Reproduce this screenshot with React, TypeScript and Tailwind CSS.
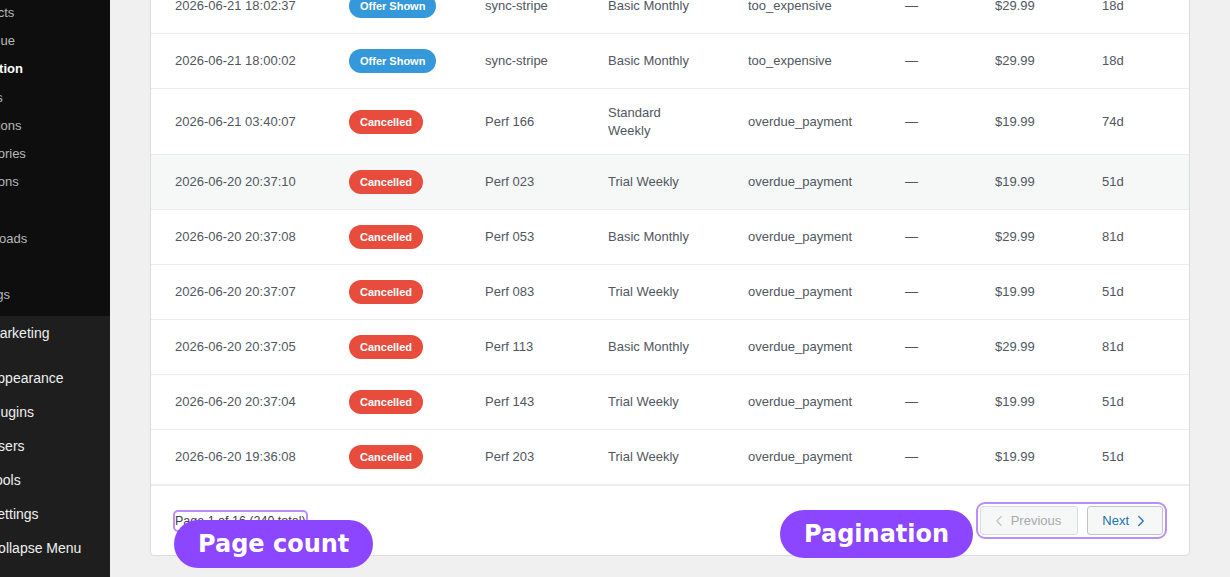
import { ChevronLeft, ChevronRight } from "lucide-react";

type Row = {
  date: string;
  status: "offer" | "cancelled";
  source: string;
  plan: string;
  reason: string;
  price: string;
  days: string;
  hover?: boolean;
};

const rows: Row[] = [
  { date: "2026-06-21 18:02:37", status: "offer", source: "sync-stripe", plan: "Basic Monthly", reason: "too_expensive", price: "$29.99", days: "18d" },
  { date: "2026-06-21 18:00:02", status: "offer", source: "sync-stripe", plan: "Basic Monthly", reason: "too_expensive", price: "$29.99", days: "18d" },
  { date: "2026-06-21 03:40:07", status: "cancelled", source: "Perf 166", plan: "Standard Weekly", reason: "overdue_payment", price: "$19.99", days: "74d" },
  { date: "2026-06-20 20:37:10", status: "cancelled", source: "Perf 023", plan: "Trial Weekly", reason: "overdue_payment", price: "$19.99", days: "51d", hover: true },
  { date: "2026-06-20 20:37:08", status: "cancelled", source: "Perf 053", plan: "Basic Monthly", reason: "overdue_payment", price: "$29.99", days: "81d" },
  { date: "2026-06-20 20:37:07", status: "cancelled", source: "Perf 083", plan: "Trial Weekly", reason: "overdue_payment", price: "$19.99", days: "51d" },
  { date: "2026-06-20 20:37:05", status: "cancelled", source: "Perf 113", plan: "Basic Monthly", reason: "overdue_payment", price: "$29.99", days: "81d" },
  { date: "2026-06-20 20:37:04", status: "cancelled", source: "Perf 143", plan: "Trial Weekly", reason: "overdue_payment", price: "$19.99", days: "51d" },
  { date: "2026-06-20 19:36:08", status: "cancelled", source: "Perf 203", plan: "Trial Weekly", reason: "overdue_payment", price: "$19.99", days: "51d" },
];

const submenu = [
  { label: "Products" },
  { label: "Revenue" },
  { label: "Retention", current: true },
  { label: "Events" },
  { label: "Questions" },
  { label: "Categories" },
  { label: "Locations" },
  { label: "Help" },
  { label: "Downloads" },
  { label: "Logs" },
  { label: "Settings" },
];

const mainMenu = ["Appearance", "Plugins", "Users", "Tools", "Settings", "Collapse Menu"];

function Badge({ status }: { status: Row["status"] }) {
  return status === "offer" ? (
    <span className="inline-block rounded-full bg-[#3498db] px-[11px] py-[4px] text-[11px] font-bold leading-[16px] text-white">
      Offer Shown
    </span>
  ) : (
    <span className="inline-block rounded-full bg-[#e74c3c] px-[11px] py-[4px] text-[11px] font-bold leading-[16px] text-white">
      Cancelled
    </span>
  );
}

export default function App() {
  return (
    <div className="relative flex h-[577px] overflow-hidden bg-[#f0f0f1] font-['Liberation_Sans',Arial,sans-serif]">
      {/* admin sidebar, scrolled so only the right part shows */}
      <aside className="w-[110px] shrink-0 overflow-hidden bg-[#1e1e1e]">
        <ul className="-mt-[1px] bg-[#0e0e0e] pb-[7px]">
          {submenu.map((item) => (
            <li
              key={item.label}
              className={`-ml-[37px] whitespace-nowrap py-[5px] text-[13px] leading-[18.2px] ${
                item.current ? "font-bold text-white" : "text-[#b8b8b8]"
              }`}
            >
              {item.label}
            </li>
          ))}
        </ul>
        <ul className="text-[14px] leading-[18px] text-[#f0f0f1]">
          <li className="-ml-[12px] whitespace-nowrap py-[8px]">Marketing</li>
          <li className="h-[11px]" />
          {mainMenu.map((label) => (
            <li key={label} className="-ml-[12px] whitespace-nowrap py-[8px]">
              {label}
            </li>
          ))}
        </ul>
      </aside>

      <main className="flex-1 px-10">
        <div className="-mt-[22px] rounded-b-[4px] border border-[#dcdcde] bg-white">
          <table className="w-full table-fixed border-collapse text-left text-[13px] leading-[18px] text-[#50575e]">
            <colgroup>
              <col className="w-[174px]" />
              <col className="w-[136px]" />
              <col className="w-[123px]" />
              <col className="w-[140px]" />
              <col className="w-[157px]" />
              <col className="w-[90px]" />
              <col className="w-[107px]" />
              <col />
            </colgroup>
            <tbody>
              {rows.map((r) => (
                <tr key={r.date} className={`border-b border-[#ececec] ${r.hover ? "bg-[#f6f7f7]" : ""}`}>
                  <td className="px-6 py-[15px] align-middle whitespace-nowrap">{r.date}</td>
                  <td className="px-6 py-[15px] align-middle">
                    <Badge status={r.status} />
                  </td>
                  <td className="px-6 py-[15px] align-middle">{r.source}</td>
                  <td className="px-6 py-[15px] align-middle leading-[17.5px]">{r.plan}</td>
                  <td className="px-6 py-[15px] align-middle">{r.reason}</td>
                  <td className="px-6 py-[15px] align-middle">—</td>
                  <td className="px-6 py-[15px] align-middle">{r.price}</td>
                  <td className="px-6 py-[15px] align-middle">{r.days}</td>
                </tr>
              ))}
            </tbody>
          </table>

          <div className="flex items-center justify-between border-t border-[#ececec] py-5 pl-6 pr-[26px]">
            <span className="rounded-[3px] text-[12.5px] leading-[18px] text-[#3c434a] outline-2 outline-[#b98ef9]">
              Page 1 of 16 (240 total)
            </span>
            <div className="flex gap-[9px] rounded-[5px] outline-2 outline-offset-2 outline-[#b98ef9]">
              <button className="flex h-[29px] items-center gap-[3px] rounded-[3px] border border-[#dcdcde] bg-[#f6f7f7] pl-[9px] pr-[16px] text-[13px] text-[#a7aaad]">
                <ChevronLeft size={18} strokeWidth={1.6} className="text-[#c3c4c7]" />
                Previous
              </button>
              <button className="flex h-[29px] items-center gap-[3px] rounded-[3px] border border-[#c3c4c7] bg-[#f6f7f7] pl-[14px] pr-[12px] text-[13px] text-[#2271b1]">
                Next
                <ChevronRight size={18} strokeWidth={1.6} />
              </button>
            </div>
          </div>
        </div>
      </main>

      {/* annotation labels */}
      <div className="absolute left-[174px] top-[520px] flex h-[48px] items-center rounded-full bg-[#8c46ff] px-[24px] font-['DejaVu_Sans',sans-serif] text-[24px] font-bold text-white">
        Page count
      </div>
      <div className="absolute left-[780px] top-[510px] flex h-[48px] items-center rounded-full bg-[#8c46ff] px-[24px] font-['DejaVu_Sans',sans-serif] text-[24px] font-bold text-white">
        Pagination
      </div>
    </div>
  );
}
